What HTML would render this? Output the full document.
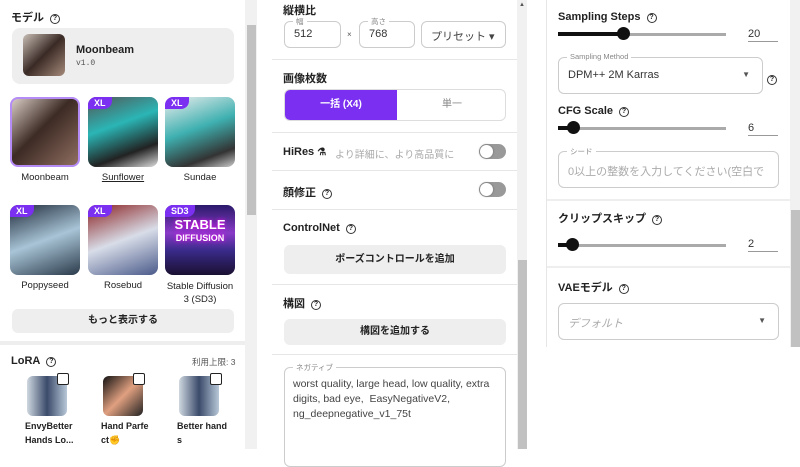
<!DOCTYPE html><html><head><meta charset="utf-8"><style>
*{box-sizing:border-box;margin:0;padding:0}
body{width:800px;height:449px;overflow:hidden;background:#fff;font-family:"Liberation Sans","Noto Sans CJK JP",sans-serif;color:#222;position:relative}
.a{position:absolute}
.t{font-size:11px;font-weight:bold;white-space:nowrap}
.q{display:inline-block;width:10px;height:10px;border:1.3px solid #333;border-radius:50%;font-size:7px;text-align:center;line-height:8px;font-weight:bold;vertical-align:1px;margin-left:6px}
.sep{position:absolute;height:1px;background:#e6e6e6}
.tile{position:absolute;width:70px;height:70px;border-radius:8px;overflow:hidden}
.badge{position:absolute;left:0;top:0;background:#7b2ff0;color:#fff;font-size:9px;font-weight:bold;padding:1px 6px 1px 6px;border-radius:0 0 8px 0}
.lbl{position:absolute;font-size:9.5px;text-align:center;width:80px;color:#222}
.btn{position:absolute;background:#eee;border-radius:6px;font-size:10px;font-weight:bold;text-align:center}
.fld{position:absolute;border:1px solid #ccc;border-radius:6px}
.leg{position:absolute;top:-6px;left:8px;background:#fff;font-size:7.5px;color:#888;padding:0 3px}
.tog{position:absolute;width:27px;height:15px;border-radius:8px;background:#999}
.tog:after{content:"";position:absolute;left:1px;top:1px;width:13px;height:13px;border-radius:50%;background:#fff;box-shadow:0 0 2px #666}
.trk{position:absolute;height:3px;background:#aaa}
.thumb{position:absolute;width:13px;height:13px;border-radius:50%;background:#111}
.val{position:absolute;font-size:11px;color:#333;border-bottom:1px solid #999;width:30px;height:14px}
.cb{position:absolute;width:12px;height:12px;border:1.5px solid #222;background:#fff;border-radius:2px}
.lt{position:absolute;width:40px;height:40px;border-radius:6px}
.ll{position:absolute;font-size:9px;font-weight:bold;line-height:14px;width:60px}
</style></head><body>
<!-- panel 1 -->
<div class="a t" style="left:11px;top:9px">モデル<span class="q">?</span></div>
<div class="a" style="left:12px;top:28px;width:222px;height:56px;background:#eee;border-radius:8px"></div>
<div class="a" style="left:23px;top:34px;width:42px;height:42px;border-radius:6px;background:linear-gradient(135deg,#c9bfb6,#3a2a25 50%,#a58a7a)"></div>
<div class="a" style="left:76px;top:44px;font-size:11px;font-weight:bold">Moonbeam</div>
<div class="a" style="left:76px;top:59px;font-size:8px;font-family:'Liberation Mono',monospace;color:#555">v1.0</div>
<div class="tile" style="left:10px;top:97px;border:2px solid #b58cf5;background:linear-gradient(135deg,#d8ccc4,#3c2a24 45%,#8f6e60)"></div>
<div class="tile" style="left:88px;top:97px;background:linear-gradient(160deg,#555,#2bb5b5 40%,#222 75%,#ddd)"><div class="badge">XL</div></div>
<div class="tile" style="left:165px;top:97px;background:linear-gradient(160deg,#eee,#3fb0b0 45%,#333 80%,#ccc)"><div class="badge">XL</div></div>
<div class="lbl" style="left:5px;top:172px">Moonbeam</div>
<div class="lbl" style="left:83px;top:172px;text-decoration:underline">Sunflower</div>
<div class="lbl" style="left:160px;top:172px">Sundae</div>
<div class="tile" style="left:10px;top:205px;background:linear-gradient(160deg,#1e2a3a,#a8c4d6 50%,#2a3a4a)"><div class="badge">XL</div></div>
<div class="tile" style="left:88px;top:205px;background:linear-gradient(160deg,#8a2020,#d8dde8 50%,#4a5a8a)"><div class="badge">XL</div></div>
<div class="tile" style="left:165px;top:205px;background:linear-gradient(180deg,#2a1a6a,#8a3ac8 40%,#3a2a8a 65%,#1a1030)"><div class="badge">SD3</div><div style="position:absolute;top:14px;width:70px;text-align:center;color:#fff;font-weight:bold;font-size:13px;line-height:12px;text-shadow:0 0 4px #f0f">STABLE<br><span style="font-size:9px">DIFFUSION</span></div></div>
<div class="lbl" style="left:5px;top:280px">Poppyseed</div>
<div class="lbl" style="left:83px;top:280px">Rosebud</div>
<div class="lbl" style="left:155px;top:280px;width:90px;line-height:13px">Stable Diffusion<br>3 (SD3)</div>
<div class="btn" style="left:12px;top:309px;width:222px;height:24px;line-height:24px">もっと表示する</div>
<div class="a" style="left:0;top:341px;width:245px;height:4px;background:#eee"></div>
<div class="a t" style="left:11px;top:355px">LoRA<span class="q">?</span></div>
<div class="a" style="left:192px;top:356px;font-size:8.5px;color:#555">利用上限: 3</div>
<div class="lt" style="left:27px;top:376px;background:linear-gradient(90deg,#cfd8e0,#3a4a6a 50%,#b8c8d8)"></div>
<div class="lt" style="left:103px;top:376px;background:linear-gradient(135deg,#111,#e0a080 50%,#222)"></div>
<div class="lt" style="left:179px;top:376px;background:linear-gradient(90deg,#cfd8e0,#3a4a6a 50%,#b8c8d8)"></div>
<div class="cb" style="left:57px;top:373px"></div><div class="cb" style="left:133px;top:373px"></div><div class="cb" style="left:210px;top:373px"></div>
<div class="ll" style="left:25px;top:419px">EnvyBetter<br>Hands Lo...</div>
<div class="ll" style="left:101px;top:419px">Hand Parfe<br>ct✊</div>
<div class="ll" style="left:177px;top:419px">Better hand<br>s</div>
<div class="a" style="left:245px;top:0;width:12px;height:449px;background:#f1f1f1"></div>
<div class="a" style="left:247px;top:25px;width:9px;height:190px;background:#c1c1c1"></div>
<!-- panel 2 -->
<div class="a t" style="left:283px;top:2px">縦横比</div>
<div class="fld" style="left:284px;top:21px;width:57px;height:27px"><span class="leg">幅</span><span style="position:absolute;left:9px;top:6px;font-size:11px;color:#333">512</span></div>
<div class="a" style="left:347px;top:30px;font-size:8px;color:#555">×</div>
<div class="fld" style="left:359px;top:21px;width:56px;height:27px"><span class="leg">高さ</span><span style="position:absolute;left:9px;top:6px;font-size:11px;color:#333">768</span></div>
<div class="fld" style="left:421px;top:21px;width:85px;height:27px"><span style="position:absolute;left:9px;top:6px;font-size:11px;color:#444">プリセット ▾</span></div>
<div class="sep" style="left:272px;top:59px;width:245px"></div>
<div class="a t" style="left:283px;top:70px">画像枚数</div>
<div class="a" style="left:284px;top:89px;width:222px;height:32px;border:1px solid #ddd;border-radius:6px;overflow:hidden"><div style="position:absolute;left:0;top:0;width:112px;height:32px;background:#7b2ff0;color:#fff;font-size:10px;font-weight:bold;text-align:center;line-height:30px">一括 (X4)</div><div style="position:absolute;left:112px;top:0;width:110px;text-align:center;font-size:10px;color:#888;line-height:30px">単一</div></div>
<div class="sep" style="left:272px;top:132px;width:245px"></div>
<div class="a t" style="left:283px;top:146px">HiRes <span style="font-size:10px">⚗</span></div>
<div class="a" style="left:335px;top:146px;font-size:10px;color:#aaa">より詳細に、より高品質に</div>
<div class="tog" style="left:479px;top:144px"></div>
<div class="sep" style="left:272px;top:170px;width:245px"></div>
<div class="a t" style="left:283px;top:184px">顔修正<span class="q">?</span></div>
<div class="tog" style="left:479px;top:182px"></div>
<div class="sep" style="left:272px;top:209px;width:245px"></div>
<div class="a t" style="left:283px;top:222px">ControlNet<span class="q">?</span></div>
<div class="btn" style="left:284px;top:245px;width:222px;height:29px;line-height:29px">ポーズコントロールを追加</div>
<div class="sep" style="left:272px;top:284px;width:245px"></div>
<div class="a t" style="left:283px;top:295px">構図<span class="q">?</span></div>
<div class="btn" style="left:284px;top:319px;width:222px;height:26px;line-height:26px">構図を追加する</div>
<div class="sep" style="left:272px;top:354px;width:245px"></div>
<div class="fld" style="left:284px;top:367px;width:222px;height:100px"><span class="leg">ネガティブ</span><div style="position:absolute;left:8px;top:9px;font-size:10.5px;line-height:15px;color:#444;width:210px">worst quality, large head, low quality, extra digits, bad eye,&nbsp; EasyNegativeV2, ng_deepnegative_v1_75t</div></div>
<div class="a" style="left:517px;top:0;width:10px;height:449px;background:#f1f1f1"></div>
<div class="a" style="left:518px;top:260px;width:9px;height:189px;background:#c1c1c1"></div>
<div class="a" style="left:519px;top:2px;font-size:6px;color:#555">▲</div>
<!-- panel 3 -->
<div class="a" style="left:546px;top:0;width:1px;height:347px;background:#e6e6e6"></div>
<div class="a t" style="left:558px;top:11px">Sampling Steps<span class="q">?</span></div>
<div class="trk" style="left:558px;top:33px;width:168px"></div><div class="trk" style="left:558px;top:32px;width:66px;height:4px;background:#111"></div>
<div class="thumb" style="left:617px;top:27px"></div>
<div class="val" style="left:748px;top:28px">20</div>
<div class="fld" style="left:558px;top:57px;width:205px;height:37px"><span class="leg">Sampling Method</span><span style="position:absolute;left:9px;top:11px;font-size:11px;color:#333">DPM++ 2M Karras</span><span style="position:absolute;right:12px;top:12px;font-size:8px;color:#555">▼</span></div>
<div class="a" style="left:767px;top:69px"><span class="q" style="margin:0">?</span></div>
<div class="a t" style="left:558px;top:105px">CFG Scale<span class="q">?</span></div>
<div class="trk" style="left:558px;top:127px;width:168px"></div><div class="trk" style="left:558px;top:126px;width:15px;height:4px;background:#111"></div>
<div class="thumb" style="left:567px;top:121px"></div>
<div class="val" style="left:748px;top:122px">6</div>
<div class="fld" style="left:558px;top:151px;width:221px;height:37px"><span class="leg">シード</span><span style="position:absolute;left:9px;top:11px;font-size:11px;color:#aaa;white-space:nowrap">0以上の整数を入力してください(空白で</span></div>
<div class="sep" style="left:547px;top:199px;width:243px;height:2px;background:#eee"></div>
<div class="a t" style="left:558px;top:210px">クリップスキップ<span class="q">?</span></div>
<div class="trk" style="left:558px;top:244px;width:168px"></div><div class="trk" style="left:558px;top:243px;width:14px;height:4px;background:#111"></div>
<div class="thumb" style="left:566px;top:238px"></div>
<div class="val" style="left:748px;top:238px">2</div>
<div class="sep" style="left:547px;top:266px;width:243px;height:2px;background:#eee"></div>
<div class="a t" style="left:558px;top:279px">VAEモデル<span class="q">?</span></div>
<div class="fld" style="left:558px;top:303px;width:221px;height:37px"><span style="position:absolute;left:9px;top:11px;font-size:11px;color:#aaa;font-style:italic">デフォルト</span><span style="position:absolute;right:12px;top:12px;font-size:8px;color:#555">▼</span></div>
<div class="a" style="left:790px;top:0;width:10px;height:347px;background:#f1f1f1"></div>
<div class="a" style="left:791px;top:210px;width:9px;height:137px;background:#c1c1c1"></div>
</body></html>
